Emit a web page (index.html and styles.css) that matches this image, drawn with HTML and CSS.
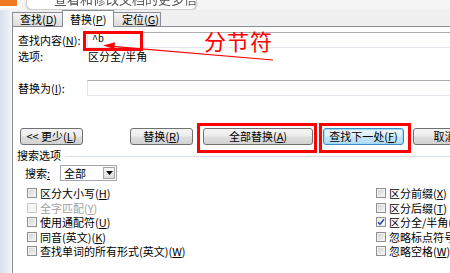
FILE: index.html
```html
<!DOCTYPE html>
<html lang="zh-CN">
<head>
<meta charset="utf-8">
<title>查找和替换</title>
<link rel="stylesheet" href="styles.css">
</head>
<body>
<div class="screen">
  <div class="topbar">
    <div class="app-icon"></div>
    <div class="tip"><span class="tip-text">查看和修改文档的更多信息</span></div>
  </div>
  <div class="main">
    <div class="frame"></div>
    <div class="dialog">
      <div class="tabs">
        <div class="tab tab-find">查找(<u>D</u>)</div>
        <div class="tab tab-rep active">替换(<u>P</u>)</div>
        <div class="tab tab-goto">定位(<u>G</u>)</div>
      </div>
      <div class="panel">
        <div class="field">
          <span class="label">查找内容(<u>N</u>):</span>
          <div class="input">^b</div>
        </div>
        <div class="field opt">
          <span class="label">选项:</span>
          <span class="opt-val">区分全/半角</span>
        </div>
        <div class="field field-replace">
          <span class="label">替换为(<u>I</u>):</span>
          <div class="input"></div>
        </div>
        <div class="buttons">
          <button class="btn b-less">&lt;&lt; 更少(<u>L</u>)</button>
          <button class="btn b-rep">替换(<u>R</u>)</button>
          <span class="hl hl-all"><button class="btn b-all">全部替换(<u>A</u>)</button></span>
          <span class="hl hl-next"><button class="btn b-next">查找下一处(<u>F</u>)</button></span>
          <button class="btn b-cancel">取消</button>
        </div>
        <div class="group-head"><span>搜索选项</span></div>
        <div class="search-row">
          <span class="search-label">搜索<u>:</u></span>
          <div class="select"><span class="sel-val">全部</span><span class="drop"><svg width="7" height="4" viewBox="0 0 7 4"><path d="M0 0H7L3.5 4Z" fill="#000"/></svg></span></div>
        </div>
        <div class="checks">
          <div class="chk"><span class="box"></span>区分大小写(<u>H</u>)</div>
          <div class="chk disabled"><span class="box"></span>全字匹配(<u>Y</u>)</div>
          <div class="chk"><span class="box"></span>使用通配符(<u>U</u>)</div>
          <div class="chk"><span class="box"></span>同音(英文)(<u>K</u>)</div>
          <div class="chk"><span class="box"></span>查找单词的所有形式(英文)(<u>W</u>)</div>
          <div class="chk"><span class="box"></span>区分前缀(<u>X</u>)</div>
          <div class="chk"><span class="box"></span>区分后缀(<u>T</u>)</div>
          <div class="chk"><span class="box checked"><svg width="8" height="8" viewBox="0 0 8 8"><path d="M1 4.2L3 6.3L7 1.2" fill="none" stroke="#2b4fa6" stroke-width="1.5"/></svg></span>区分全/半角(<u>M</u>)</div>
          <div class="chk"><span class="box"></span>忽略标点符号(<u>S</u>)</div>
          <div class="chk"><span class="box"></span>忽略空格(<u>W</u>)</div>
        </div>
      </div>
    </div>
  </div>

  <div class="ann-box"></div>
  <div class="ann-text">分节符</div>
  <svg class="ann-arrow" width="450" height="273" viewBox="0 0 450 273">
    <line x1="112" y1="46.3" x2="273" y2="60" stroke="#f00" stroke-width="1.2"/>
    <path d="M103 45.5L115 42.3L114.3 49Z" fill="#f00"/>
  </svg>
</div>
</body>
</html>
```

FILE: styles.css
```css
* { box-sizing: border-box; }

html, body {
  margin: 0;
  padding: 0;
}

body {
  width: 450px;
  height: 273px;
  overflow: hidden;
  background: #f0f0f0;
  font-family: "Noto Sans CJK SC", "Liberation Sans", sans-serif;
  font-size: 11px;
  color: #000;
}

.screen {
  position: relative;
  width: 450px;
  height: 273px;
  overflow: hidden;
  display: flex;
  flex-direction: column;
}

u { text-decoration: underline; text-underline-offset: 1px; }

/* top strip */
.topbar {
  height: 10px;
  display: flex;
  align-items: flex-start;
  background: #f5f5f5;
}

.app-icon {
  width: 19px;
  height: 8px;
  background: #ef7a23;
  border-right: 2px solid #fff;
  border-bottom: 2px solid #fff;
}

.tip {
  margin-left: 7px;
  width: 171px;
  height: 10px;
  background: #fff;
  border: 1px solid #cfcfcf;
  border-top: none;
  border-radius: 0 0 6px 6px;
  box-shadow: 0 1px 2px rgba(0, 0, 0, 0.18);
  overflow: hidden;
}

.tip-text {
  display: block;
  margin-top: -8px;
  padding-left: 27px;
  font-size: 13px;
  line-height: 14px;
  color: #555;
  white-space: nowrap;
  filter: blur(0.3px);
}

/* main area */
.main {
  flex: 1;
  display: flex;
  min-height: 0;
}

.frame {
  width: 12px;
  background: linear-gradient(to right, #d8e2ed, #eaf0f6 80%, #f7f9fb);
}

.dialog {
  flex: 1;
  display: flex;
  flex-direction: column;
  min-width: 0;
  background: #f0f0f0;
}

.tabs {
  height: 17px;
  display: flex;
  align-items: flex-end;
  border-bottom: 1px solid #898c95;
}

.tab {
  height: 14px;
  margin-bottom: 0;
  border: 1px solid #898c95;
  border-bottom: none;
  background: linear-gradient(#f3f3f3, #dcdcdc);
  line-height: 12px;
  padding-left: 7px;
  white-space: nowrap;
}

.tab-find { width: 51px; }
.tab-rep { width: 52px; margin-left: -1px; }
.tab-goto { width: 48px; margin-left: -1px; padding-left: 8px; }

.tab.active {
  height: 17px;
  margin-bottom: -1px;
  background: #fff;
  padding-top: 2px;
  position: relative;
  z-index: 1;
}

.panel {
  flex: 1;
  background: #fff;
  border-left: 1px solid #898c95;
  padding-left: 5px;
  display: flex;
  flex-direction: column;
}

.field {
  display: grid;
  grid-template-columns: 69px 1fr;
  height: 16px;
  margin-top: 5px;
  align-items: center;
}

.label {
  line-height: 16px;
  white-space: nowrap;
}

.input {
  height: 16px;
  margin-right: -12px;
  border: 1px solid;
  border-color: #abadb3 #dbdfe6 #e3e9ef #e2e3ea;
  background: #fff;
  padding-left: 4px;
  line-height: 14px;
  font-family: "Liberation Mono", "Noto Sans CJK SC", monospace;
  font-size: 10px;
}

.opt {
  margin-top: 0;
  height: 15px;
}

.opt-val {
  padding-left: 1px;
  line-height: 15px;
  white-space: nowrap;
}

.field-replace { margin-top: 17px; }

/* buttons */
.buttons {
  margin-top: 27px;
  height: 30px;
  padding-left: 2px;
  display: flex;
  align-items: flex-start;
  white-space: nowrap;
}

.btn {
  height: 17px;
  margin: 5px 0 0;
  padding: 0;
  border: 1px solid #707070;
  border-radius: 3px;
  background: linear-gradient(#f4f4f4 0%, #ececec 48%, #dedede 52%, #d2d2d2 100%);
  font-family: "Noto Sans CJK SC", sans-serif;
  font-size: 11px;
  line-height: 15px;
  color: #000;
  white-space: nowrap;
  flex: none;
}

.b-less { width: 63px; }
.b-rep { width: 63px; margin-left: 47px; }
.b-all { width: 110px; margin-top: 0; }
.b-next {
  width: 81px;
  margin-top: 0;
  border-color: #3c8bc0;
  background: linear-gradient(#eaf5fc 0%, #dcf0fb 48%, #c5e5f7 52%, #b5dcf3 100%);
  box-shadow: inset 0 0 0 1px #9fdbf5;
}
.b-cancel { width: 63px; margin-left: 2px; }

.hl {
  display: flex;
  border: 3px solid #f00;
  flex: none;
}

.hl-all { margin-left: 4px; padding: 2px 1px 5px 3px; }
.hl-next { margin-left: 2px; padding: 2px 4px 5px 1px; }

/* search options */
.group-head {
  margin-top: -4px;
  height: 12px;
  display: flex;
  align-items: center;
  line-height: 12px;
  margin-left: -1px;
}

.group-head::after {
  content: "";
  flex: 1;
  height: 1px;
  margin-left: 4px;
  margin-top: 2px;
  background: #d5dfe5;
}

.search-row {
  margin-top: 4px;
  height: 16px;
  display: flex;
  align-items: center;
  padding-left: 7px;
}

.search-label {
  width: 35px;
  line-height: 16px;
}

.select {
  width: 57px;
  height: 16px;
  border: 1px solid #a3a8b0;
  display: flex;
  align-items: stretch;
  background: #fff;
}

.sel-val {
  flex: 1;
  padding-left: 3px;
  line-height: 14px;
}

.drop {
  width: 12px;
  margin: 1px;
  border: 1px solid #a7a7a7;
  background: linear-gradient(#f7f7f7, #dcdcdc);
  display: flex;
  align-items: center;
  justify-content: center;
}

.checks {
  margin-top: 5px;
  padding-left: 9px;
  display: grid;
  grid-template-columns: 349px 1fr;
  grid-template-rows: repeat(5, 14.5px);
  grid-auto-flow: column;
}

.chk {
  display: flex;
  align-items: center;
  white-space: nowrap;
  line-height: 14.5px;
}

.box {
  width: 10px;
  height: 10px;
  margin-right: 3px;
  border: 1px solid #8e8f8f;
  background: linear-gradient(135deg, #cdd0d4 0%, #e6e8ea 60%, #f6f6f6 100%);
  box-shadow: inset 0 0 0 1px #f2f2f2;
  display: flex;
  align-items: center;
  justify-content: center;
  flex: none;
}

.box.checked {
  background: linear-gradient(135deg, #e4e6e9, #fafafa);
}

.chk.disabled { color: #a0a0a0; }
.chk.disabled .box {
  border-color: #c8c8c8;
  background: #f4f4f4;
  box-shadow: none;
}

/* annotations */
.ann-box {
  position: absolute;
  left: 83px;
  top: 31px;
  width: 60px;
  height: 20px;
  border: 3px solid #f00;
}

.ann-text {
  position: absolute;
  left: 204px;
  top: 27px;
  font-size: 22px;
  line-height: 26px;
  letter-spacing: 1px;
  color: #f00;
  white-space: nowrap;
}

.ann-arrow {
  position: absolute;
  left: 0;
  top: 0;
  pointer-events: none;
}
```
